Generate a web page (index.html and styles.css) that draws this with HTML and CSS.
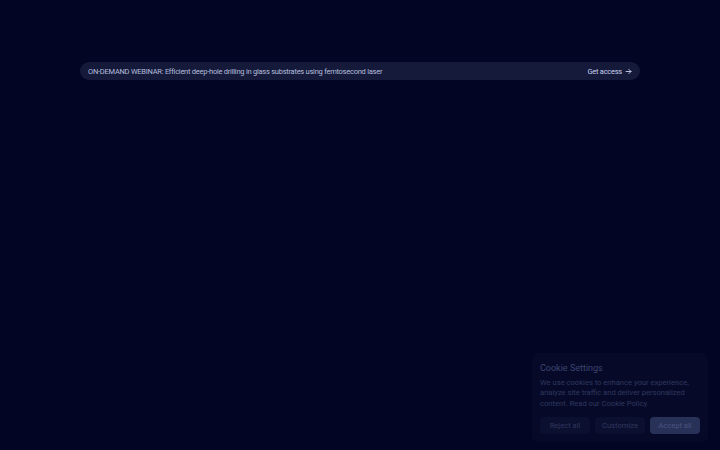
FILE: index.html
```html
<!DOCTYPE html>
<html lang="en">
<head>
  <meta charset="UTF-8">
  <meta name="viewport" content="width=device-width, initial-scale=1.0">
  <title>On-demand webinar</title>
  <link rel="stylesheet" href="styles.css">
</head>
<body>

  <div class="page">
    <!-- 상단 공지 배너 -->
    <div class="banner">
      <span class="banner-text">ON-DEMAND WEBINAR: Efficient deep-hole drilling in glass substrates using femtosecond laser</span>
      <a class="banner-link" href="#">Get access
        <svg class="arrow" viewBox="0 0 10 10" width="7" height="7"><path d="M1.5 5h7M5.5 2l3 3-3 3" fill="none" stroke="currentColor" stroke-width="1.3" stroke-linecap="round" stroke-linejoin="round"/></svg>
      </a>
    </div>
  </div>

  <!-- 쿠키 설정 -->
  <div class="cookie">
    <div class="cookie-title">Cookie Settings</div>
    <p class="cookie-text">We use cookies to enhance your experience, analyze site traffic and deliver personalized content. Read our Cookie Policy.</p>
    <div class="cookie-buttons">
      <button class="btn">Reject all</button>
      <button class="btn">Customize</button>
      <button class="btn btn-primary">Accept all</button>
    </div>
  </div>

</body>
</html>
```

FILE: styles.css
```css
html, body {
  height: 100%;
  margin: 0;
  padding: 0;
  overflow: hidden;
}

body {
  background-color: #020624;
  font-family: Roboto, "Liberation Sans", sans-serif;
}

.page {
  padding: 62px 80px 0;
}

.banner {
  display: flex;
  justify-content: space-between;
  align-items: center;
  height: 18px;
  padding: 0 8px;
  border-radius: 9px;
  background-color: #151a3a;
  font-size: 7.5px;
  letter-spacing: -0.25px;
}

.banner-text {
  color: #b4bddd;
}

.banner-link {
  display: flex;
  align-items: center;
  gap: 3px;
  color: #c8d0ee;
  text-decoration: none;
}

.cookie {
  position: fixed;
  right: 12px;
  bottom: 8px;
  width: 160px;
  padding: 10px 8px 8px 8px;
  border-radius: 6px;
  background-color: #060a28;
}

.cookie-title {
  font-size: 9px;
  color: #3d4470;
  margin-bottom: 5px;
}

.cookie-text {
  margin: 0 0 8px;
  font-size: 7.6px;
  line-height: 10.5px;
  color: #30375e;
}

.cookie-buttons {
  display: flex;
  gap: 5px;
}

.btn {
  flex: 1;
  height: 17px;
  padding: 0;
  border: none;
  border-radius: 4px;
  background-color: #0b1030;
  color: #30375c;
  font-family: inherit;
  font-size: 7.6px;
}

.btn-primary {
  background-color: #283158;
  color: #4a5480;
}
```
